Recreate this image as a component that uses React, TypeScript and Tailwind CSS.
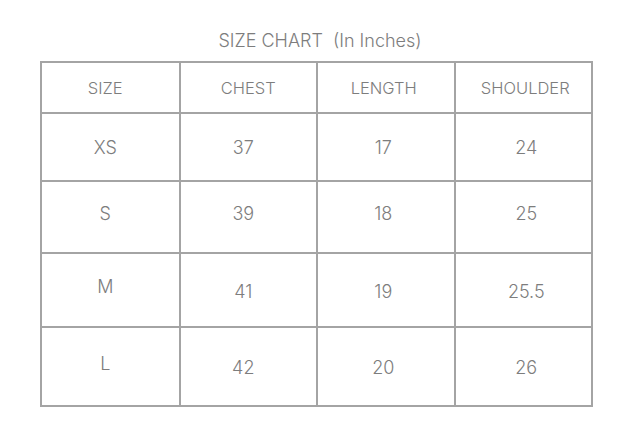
import React from "react";

type Cell = { text: string; shift?: string };

const header: Cell[] = [
  { text: "SIZE", shift: "pr-[10px]" },
  { text: "CHEST" },
  { text: "LENGTH", shift: "pr-[4px]" },
  { text: "SHOULDER", shift: "pl-[4px]" },
];

// horizontal nudges per column for the body rows
const colShift = ["pr-[10px]", "pr-[10px]", "pr-[5px]", "pl-[6px]"];

const rows: { height: string; cells: Cell[] }[] = [
  {
    height: "h-[68px]",
    cells: [{ text: "XS" }, { text: "37" }, { text: "17" }, { text: "24" }],
  },
  {
    height: "h-[72px]",
    cells: [
      { text: "S", shift: "pb-[7px]" },
      { text: "39", shift: "pb-[7px]" },
      { text: "18", shift: "pb-[7px]" },
      { text: "25", shift: "pb-[7px]" },
    ],
  },
  {
    height: "h-[74px]",
    cells: [
      { text: "M", shift: "pb-[8px]" },
      { text: "41", shift: "pt-[2px]" },
      { text: "19", shift: "pt-[2px]" },
      { text: "25.5", shift: "pt-[2px]" },
    ],
  },
  {
    height: "h-[79px]",
    cells: [
      { text: "L", shift: "pb-[6px]" },
      { text: "42", shift: "pt-[1px]" },
      { text: "20", shift: "pt-[1px]" },
      { text: "26", shift: "pt-[1px]" },
    ],
  },
];

const widths = ["w-[139px]", "w-[138px]", "w-[138px]", "w-[138px]"];

const App = () => {
  return (
    <div className="flex h-[448px] w-[640px] flex-col bg-white font-['Inter','Liberation_Sans',sans-serif] font-light text-[#7d7d7d]">
      <h1 className="mt-[28px] h-[25px] whitespace-pre text-center text-[18px] leading-[25px]">
        {"SIZE CHART  (In Inches)"}
      </h1>
      <div className="ml-[40px] mt-[8px] w-[553px] border-l-2 border-t-2 border-[#a4a4a4]">
        <div className="flex h-[51px]">
          {header.map((h, i) => (
            <div
              key={h.text}
              className={`${widths[i]} flex items-center justify-center border-b-2 border-r-2 border-[#a4a4a4] pt-[1px] text-[16.5px] ${h.shift ?? ""}`}
            >
              {h.text}
            </div>
          ))}
        </div>
        {rows.map((row, r) => (
          <div key={r} className={`flex ${row.height}`}>
            {row.cells.map((c, i) => (
              <div
                key={i}
                className={`${widths[i]} flex items-center justify-center border-b-2 border-r-2 border-[#a4a4a4] text-[18px] ${colShift[i]} ${c.shift ?? ""}`}
              >
                {c.text}
              </div>
            ))}
          </div>
        ))}
      </div>
    </div>
  );
};

export default App;
